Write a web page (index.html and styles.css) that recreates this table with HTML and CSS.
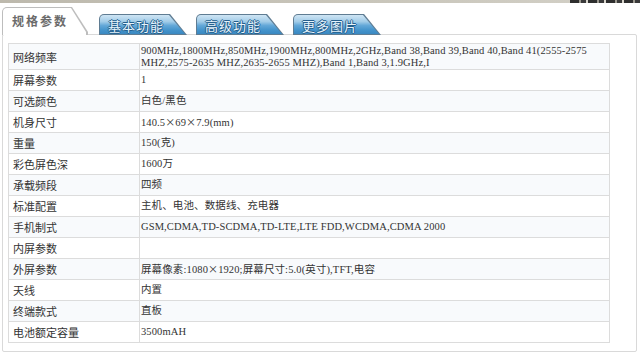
FILE: index.html
```html
<!DOCTYPE html>
<html lang="zh">
<head>
<meta charset="utf-8">
<title>规格参数</title>
<link rel="stylesheet" href="styles.css">
</head>
<body>
<div class="top"><div class="top-dark"></div></div>
<div class="tabs">
  <div class="tab active"><span>规格参数</span></div>
  <div class="tab"><span>基本功能</span></div>
  <div class="tab"><span>高级功能</span></div>
  <div class="tab"><span>更多图片</span></div>
</div>
<div class="panel">
  <table class="spec">
    <tr class="odd first"><td class="k">网络频率</td><td class="v">900MHz,1800MHz,850MHz,1900MHz,800MHz,2GHz,Band 38,Band 39,Band 40,Band 41(<span class="nw">2555-2575</span> MHZ,<span class="nw">2575-2635</span> MHZ,<span class="nw">2635-2655</span> MHZ),Band 1,Band 3,1.9GHz,I</td></tr>
    <tr><td class="k">屏幕参数</td><td class="v">1</td></tr>
    <tr class="odd"><td class="k">可选颜色</td><td class="v">白色/黑色</td></tr>
    <tr><td class="k">机身尺寸</td><td class="v">140.5<span class="cj">×</span>69<span class="cj">×</span>7.9(mm)</td></tr>
    <tr class="odd"><td class="k">重量</td><td class="v">150(克)</td></tr>
    <tr><td class="k">彩色屏色深</td><td class="v">1600万</td></tr>
    <tr class="odd"><td class="k">承载频段</td><td class="v">四频</td></tr>
    <tr><td class="k">标准配置</td><td class="v">主机、电池、数据线、充电器</td></tr>
    <tr class="odd"><td class="k">手机制式</td><td class="v">GSM,CDMA,TD-SCDMA,TD-LTE,LTE FDD,WCDMA,CDMA 2000</td></tr>
    <tr><td class="k">内屏参数</td><td class="v"></td></tr>
    <tr class="odd"><td class="k">外屏参数</td><td class="v">屏幕像素:1080<span class="cj">×</span>1920;屏幕尺寸:5.0(英寸),TFT,电容</td></tr>
    <tr><td class="k">天线</td><td class="v">内置</td></tr>
    <tr class="odd"><td class="k">终端款式</td><td class="v">直板</td></tr>
    <tr><td class="k">电池额定容量</td><td class="v">3500mAH</td></tr>
  </table>
</div>
</body>
</html>
```

FILE: styles.css
```css
html, body {
  margin: 0;
  padding: 0;
  background: #fff;
}
body {
  width: 640px;
  height: 355px;
  overflow: hidden;
  font-family: "Noto Sans CJK SC", sans-serif;
  color: #333;
}
.top {
  height: 3px;
  background: linear-gradient(to right, #bdb9ad, #c9c6bb 60%, #d4d1c8);
  display: flex;
  justify-content: flex-end;
}
.top-dark {
  width: 70px;
  height: 3px;
  background: repeating-linear-gradient(to right, #2e2e2e 0 9px, #9a978e 9px 11px, #3a3a3a 11px 16px, #d8d5cc 16px 18px);
}
.tabs {
  margin-top: 4px;
  padding-left: 2px;
  height: 28px;
  display: flex;
  align-items: flex-end;
  gap: 9px;
  position: relative;
  z-index: 2;
  margin-bottom: -1px;
}
.tab {
  position: relative;
  width: 88px;
  height: 21px;
  background: #5f7c92;
  border-radius: 5px 0 0 0;
  clip-path: polygon(0 0, 71px 0, 100% 100%, 0 100%);
  display: flex;
  align-items: center;
}
.tab::before {
  content: "";
  position: absolute;
  left: 1px;
  top: 1px;
  right: 2px;
  bottom: 1px;
  border-radius: 4px 0 0 0;
  clip-path: polygon(0 0, 69px 0, 100% 100%, 0 100%);
  background: linear-gradient(to bottom, #cfe5f4 0%, #a2cce8 35%, #64a8d8 55%, #4393cb 80%, #3a88c1 100%);
}
.tab span {
  position: relative;
  z-index: 1;
  margin-left: 9px;
  font-size: 13px;
  letter-spacing: 1px;
  color: #e6f3fc;
  text-shadow: 1px 0 #245f8d, -1px 0 #245f8d, 0 1px #245f8d, 0 -1px #245f8d;
  line-height: 1;
  padding-top: 2px;
}
.tab.active {
  width: 88px;
  height: 28px;
  background: #bdbdbd;
  clip-path: polygon(0 0, 70px 0, 86px 25px, 86px 100%, 0 100%);
}
.tab.active::before {
  left: 1px;
  top: 1px;
  right: 3px;
  bottom: 0;
  background: #fff;
  clip-path: polygon(0 0, 68px 0, 83px 24px, 83px 100%, 0 100%);
}
.tab.active span {
  margin-left: 10px;
  font-size: 12px;
  font-weight: bold;
  letter-spacing: 2px;
  color: #6b6b6b;
  text-shadow: none;
  padding-top: 0;
  margin-top: -1px;
}
.panel {
  margin: 0 3px 0 2px;
  border: 1px solid #d9d9d9;
  border-radius: 2px;
  padding: 8px 5px 8px 5px;
  height: 300px;
}
.spec {
  width: 602px;
  border-collapse: collapse;
  table-layout: fixed;
}
.spec td {
  border: 1px solid #dcdcdc;
  height: 20px;
  padding: 0;
  vertical-align: middle;
  line-height: 12px;
}
.spec tr.odd td {
  background: #f8fafc;
}
.spec tr.first td {
  height: 25px;
}
.spec .k {
  width: 126px;
  padding-left: 4px;
  font-size: 11px;
  color: #333;
}
.spec .v {
  padding-left: 1px;
  padding-right: 16px;
  font-family: "Liberation Serif", "Noto Sans CJK SC", serif;
  font-size: 10.5px;
  letter-spacing: 0.12px;
  color: #333;
}
.spec .v .nw {
  white-space: nowrap;
}
.spec .v .cj {
  font-family: "Noto Sans CJK SC", sans-serif;
  font-size: 10px;
}
```
